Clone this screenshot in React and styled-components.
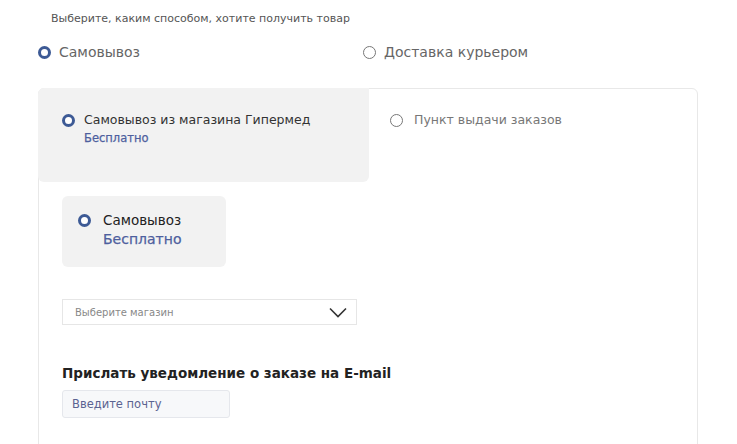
import React, { useState } from 'react';
import styled, { createGlobalStyle } from 'styled-components';

const GlobalStyle = createGlobalStyle`
  html, body {
    margin: 0;
    padding: 0;
    background: #fff;
    font-family: "DejaVu Sans", "Noto Sans", sans-serif;
  }
`;

const Page = styled.div`
  width: 737px;
  height: 444px;
  overflow: hidden;
  box-sizing: border-box;
  padding: 11px 0 0 38px;
`;

const Hint = styled.div`
  font-size: 11px;
  color: #555;
  margin-left: 13px;
  height: 15px;
  line-height: 15px;
`;

const DeliveryRow = styled.div`
  display: flex;
  margin-top: 17px;
  height: 18px;
  align-items: center;
`;

const Option = styled.label`
  display: flex;
  align-items: center;
  gap: ${p => p.$gap || 8}px;
  width: ${p => (p.$width ? `${p.$width}px` : 'auto')};
  font-size: ${p => p.$size || 14}px;
  color: ${p => p.$color || '#666'};
  cursor: pointer;
`;

const Radio = styled.span`
  flex: none;
  box-sizing: border-box;
  width: 13px;
  height: 13px;
  border-radius: 50%;
  border: ${p => (p.$checked ? '3.5px solid #3d5a95' : '1.5px solid #777')};
  background: #fff;
`;

const Card = styled.div`
  margin-top: 27px;
  width: 660px;
  height: 400px;
  box-sizing: border-box;
  border: 1px solid #e8e8e8;
  border-radius: 6px;
`;

const Tabs = styled.div`
  display: flex;
`;

const Tab = styled.div`
  width: ${p => p.$width}px;
  height: 94px;
  box-sizing: border-box;
  padding: ${p => p.$pad};
  background: ${p => (p.$active ? '#f2f2f2' : 'transparent')};
  border-radius: ${p => (p.$active ? '6px 0 6px 6px' : '0')};
  margin: -1px 0 0 -1px;
`;

const TabTitle = styled.div`
  font-size: 12.5px;
  line-height: 16px;
  color: ${p => p.$color};
`;

const Free = styled.div`
  font-size: ${p => p.$size}px;
  color: #4e5f9e;
  margin-top: ${p => p.$mt}px;
  margin-left: ${p => p.$ml || 0}px;
  -webkit-text-stroke: 0.25px #4e5f9e;
`;

const Body = styled.div`
  padding: 14px 0 0 23px;
`;

const Pickup = styled.div`
  width: 164px;
  height: 71px;
  box-sizing: border-box;
  background: #f2f2f2;
  border-radius: 6px;
  padding: 16px 0 0 16px;
  display: flex;
  gap: 12px;
`;

const PickupText = styled.div`
  display: flex;
  flex-direction: column;
`;

const PickupTitle = styled.div`
  font-size: 13.5px;
  color: #222;
  line-height: 17px;
`;

const Select = styled.div`
  margin-top: 32px;
  width: 295px;
  height: 26px;
  box-sizing: border-box;
  border: 1px solid #e6e6e6;
  display: flex;
  align-items: center;
  justify-content: space-between;
  padding: 0 9px 0 12px;
  font-size: 10px;
  color: #888;
`;

const Heading = styled.div`
  margin-top: 40px;
  font-size: 13.5px;
  font-weight: 700;
  color: #222;
`;

const EmailInput = styled.input`
  display: block;
  margin-top: 9px;
  width: 168px;
  height: 28px;
  box-sizing: border-box;
  background: #f7f8fa;
  border: 1px solid #e5e7ec;
  border-radius: 3px;
  padding: 0 9px;
  font-family: inherit;
  font-size: 11.5px;
  color: #333;
  outline: none;
  &::placeholder {
    color: #5b6391;
  }
`;

const Chevron = () => (
  <svg width="18" height="11" viewBox="0 0 18 11" fill="none">
    <path d="M1 1.5L9 9.5L17 1.5" stroke="#333" strokeWidth="1.6" />
  </svg>
);

export default function App() {
  const [delivery, setDelivery] = useState('pickup');
  const [tab, setTab] = useState('store');

  return (
    <Page>
      <GlobalStyle />
      <Hint>Выберите, каким способом, хотите получить товар</Hint>
      <DeliveryRow>
        <Option $width={325} onClick={() => setDelivery('pickup')}>
          <Radio $checked={delivery === 'pickup'} />
          Самовывоз
        </Option>
        <Option onClick={() => setDelivery('courier')}>
          <Radio $checked={delivery === 'courier'} />
          Доставка курьером
        </Option>
      </DeliveryRow>
      <Card>
        <Tabs>
          <Tab $width={331} $pad="24px 0 0 24px" $active={tab === 'store'} onClick={() => setTab('store')}>
            <Option $gap={9} $size={12.5} $color="#333">
              <Radio $checked={tab === 'store'} />
              <TabTitle $color="#333">Самовывоз из магазина Гипермед</TabTitle>
            </Option>
            <Free $size={11.5} $mt={3} $ml={22}>Бесплатно</Free>
          </Tab>
          <Tab $width={300} $pad="24px 0 0 22px" $active={tab === 'point'} onClick={() => setTab('point')}>
            <Option $gap={11} $size={12.5} $color="#777">
              <Radio $checked={tab === 'point'} />
              <TabTitle $color="#777">Пункт выдачи заказов</TabTitle>
            </Option>
          </Tab>
        </Tabs>
        <Body>
          <Pickup>
            <Radio $checked style={{ marginTop: 2 }} />
            <PickupText>
              <PickupTitle>Самовывоз</PickupTitle>
              <Free $size={14} $mt={2}>Бесплатно</Free>
            </PickupText>
          </Pickup>
          <Select>
            Выберите магазин
            <Chevron />
          </Select>
          <Heading>Прислать уведомление о заказе на E-mail</Heading>
          <EmailInput placeholder="Введите почту" />
        </Body>
      </Card>
    </Page>
  );
}
